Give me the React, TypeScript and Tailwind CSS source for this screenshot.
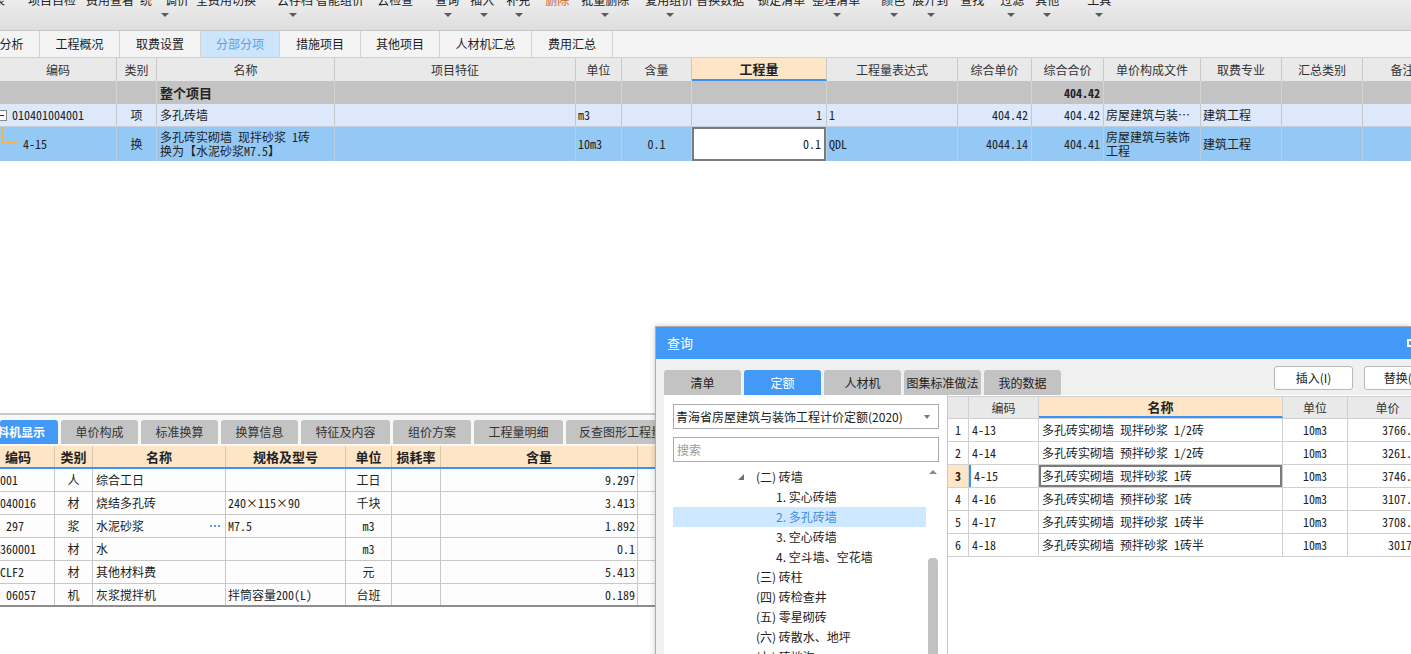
import type { ReactNode } from 'react'

const ui = "font-['Noto_Sans_CJK_SC','Noto_Sans',sans-serif]"
const song = "font-['Noto_Sans_Mono_CJK_SC','Liberation_Mono','Noto_Sans_CJK_SC',monospace]"

const toolLabels: { t: string; c: string; red?: boolean }[] = [
  { t: '报表', c: 'ml-[-19px]' },
  { t: '项目自检', c: 'ml-[23px]' },
  { t: '费用查看', c: 'ml-[10px]' },
  { t: '统', c: 'ml-[6px]' },
  { t: '调价', c: 'ml-[13px]' },
  { t: '全费用切换', c: 'ml-[7px]' },
  { t: '云存档', c: 'ml-[21px]' },
  { t: '智能组价', c: 'ml-[3px]' },
  { t: '云检查', c: 'ml-[13px]' },
  { t: '查询', c: 'ml-[22px]' },
  { t: '插入', c: 'ml-[11px]' },
  { t: '补充', c: 'ml-[12px]' },
  { t: '删除', c: 'ml-[15px]', red: true },
  { t: '批量删除', c: 'ml-[12px]' },
  { t: '复用组价', c: 'ml-[16px]' },
  { t: '替换数据', c: 'ml-[3px]' },
  { t: '锁定清单', c: 'ml-[13px]' },
  { t: '整理清单', c: 'ml-[7px]' },
  { t: '颜色', c: 'ml-[21px]' },
  { t: '展开到', c: 'ml-[7px]' },
  { t: '查找', c: 'ml-[12px]' },
  { t: '过滤', c: 'ml-[16px]' },
  { t: '其他', c: 'ml-[11px]' },
  { t: '工具', c: 'ml-[28px]' },
]

const triMargins = [
  'ml-[161px]', 'ml-[120px]', 'ml-[147px]', 'ml-[28px]', 'ml-[27px]', 'ml-[78px]', 'ml-[57px]',
  'ml-[159px]', 'ml-[49px]', 'ml-[29px]', 'ml-[72px]', 'ml-[28px]', 'ml-[44px]',
]

function Toolbar() {
  return (
    <div className="h-[31px] shrink-0 overflow-hidden border-b border-[#c6c6c6] bg-linear-to-b from-[#ededed] to-[#dedede]">
      <div className="mt-[-8px] flex h-[16px] whitespace-nowrap text-[12px] leading-[16px] text-[#222]">
        {toolLabels.map((l) => (
          <span key={l.t} className={`${l.c} shrink-0 ${l.red ? 'text-[#c8641e]' : ''}`}>
            {l.t}
          </span>
        ))}
      </div>
      <div className="mt-[5px] flex">
        {triMargins.map((m, i) => (
          <span
            key={i}
            className={`${m} h-0 w-0 shrink-0 border-x-[4px] border-t-[4px] border-x-transparent border-t-[#5a5a5a]`}
          />
        ))}
      </div>
    </div>
  )
}

const topTabs = [
  { t: '造价分析', c: 'ml-[-40px] w-[80px]' },
  { t: '工程概况', c: 'w-[80px]' },
  { t: '取费设置', c: 'w-[81px]' },
  { t: '分部分项', c: 'w-[79px]', active: true },
  { t: '措施项目', c: 'w-[81px]' },
  { t: '其他项目', c: 'w-[79px]' },
  { t: '人材机汇总', c: 'w-[92px]' },
  { t: '费用汇总', c: 'w-[81px]' },
]

function TopTabs() {
  return (
    <div className="flex h-[27px] shrink-0 overflow-hidden border-b border-[#cfcfcf] bg-[#f4f4f4] text-[12px] text-[#222]">
      {topTabs.map((tab) => (
        <div
          key={tab.t}
          className={`${tab.c} flex shrink-0 items-center justify-center border-r border-[#d2d2d2] ${
            tab.active ? 'bg-[#cce5fa] text-[#5b9fe6]' : ''
          }`}
        >
          {tab.t}
        </div>
      ))}
    </div>
  )
}

function C({ className = '', children }: { className?: string; children?: ReactNode }) {
  return <div className={`flex items-center overflow-hidden whitespace-nowrap border-r ${className}`}>{children}</div>
}

const mainGrid =
  'grid grid-cols-[117px_40px_178px_241px_46px_70px_135px_131px_74px_72px_97px_81px_81px_80px]'

const mainHeads = ['编码', '类别', '名称', '项目特征', '单位', '含量', '工程量', '工程量表达式', '综合单价', '综合合价', '单价构成文件', '取费专业', '汇总类别', '备注']

function MainTable() {
  return (
    <div className="shrink-0 overflow-hidden">
      <div className={`${mainGrid} h-[23px] bg-[#e9e9e9] text-[12px] text-[#333] [&>*]:border-[#c9c9c9]`}>
        {mainHeads.map((h, i) =>
          i === 6 ? (
            <C key={h} className="justify-center border-b-2 !border-b-[#3d93f2] bg-[#fde5c6] text-[13px] font-bold text-[#222]">
              {h}
            </C>
          ) : (
            <C key={h} className="justify-center">
              {h}
            </C>
          ),
        )}
      </div>

      <div className={`${mainGrid} h-[23px] bg-[#c3c3c3] text-[12px] text-[#222] [&>*]:border-[#d3d3d3]`}>
        <C />
        <C />
        <C className="pl-[3px] text-[13px] font-bold">整个项目</C>
        <C />
        <C />
        <C />
        <C />
        <C />
        <C />
        <C className={`justify-end pr-[3px] font-bold ${song}`}>404.42</C>
        <C />
        <C />
        <C />
        <C />
      </div>

      <div className={`${mainGrid} h-[23px] border-b border-[#c4cfdc] bg-[#dde9fb] text-[12px] text-[#222] ${song} [&>*]:border-[#c8c8c8]`}>
        <C>
          <span className="ml-[-4px] flex h-[11px] w-[11px] shrink-0 items-center justify-center border border-[#8a8a8a] bg-white">
            <span className="h-px w-[5px] bg-[#333]" />
          </span>
          <span className="ml-[5px]">010401004001</span>
        </C>
        <C className="justify-center">项</C>
        <C className="pl-[3px]">多孔砖墙</C>
        <C />
        <C className="pl-[2px]">m3</C>
        <C />
        <C className="justify-end pr-[4px]">1</C>
        <C className="pl-[2px]">1</C>
        <C className="justify-end pr-[3px]">404.42</C>
        <C className="justify-end pr-[3px]">404.42</C>
        <C className="pl-[2px]">房屋建筑与装…</C>
        <C className="pl-[2px]">建筑工程</C>
        <C />
        <C />
      </div>

      <div className={`${mainGrid} h-[34px] bg-[#94c9f6] text-[12px] text-[#222] ${song} [&>*]:border-[#b9cfe2]`}>
        <div className="flex items-center overflow-hidden border-r">
          <span className="ml-[2px] h-[16px] w-[16px] shrink-0 self-start border-b border-l border-b-[#f3b048] border-l-[#f3b048]" />
          <span className="ml-[5px]">4-15</span>
        </div>
        <C className="justify-center">换</C>
        <div className="flex flex-col justify-center overflow-hidden whitespace-nowrap border-r pl-[3px] leading-[14px]">
          <span>多孔砖实砌墙 现拌砂浆 1砖</span>
          <span>换为【水泥砂浆M7.5】</span>
        </div>
        <C />
        <C className="pl-[2px]">10m3</C>
        <C className="justify-center">0.1</C>
        <C className="justify-end bg-white pr-[5px] shadow-[inset_0_0_0_2px_#7b7b7b]">0.1</C>
        <C className="pl-[2px]">QDL</C>
        <C className="justify-end pr-[3px]">4044.14</C>
        <C className="justify-end pr-[3px]">404.41</C>
        <div className="flex flex-col justify-center overflow-hidden whitespace-nowrap border-r pl-[2px] leading-[14px]">
          <span>房屋建筑与装饰</span>
          <span>工程</span>
        </div>
        <C className="pl-[2px]">建筑工程</C>
        <C />
        <C />
      </div>
    </div>
  )
}

const botTabs = [
  { t: '工料机显示', c: 'w-[58px] justify-end pr-[13px]', active: true },
  { t: '单价构成', c: 'w-[77px] justify-center' },
  { t: '标准换算', c: 'w-[77px] justify-center' },
  { t: '换算信息', c: 'w-[77px] justify-center' },
  { t: '特征及内容', c: 'w-[89px] justify-center' },
  { t: '组价方案', c: 'w-[78px] justify-center' },
  { t: '工程量明细', c: 'w-[89px] justify-center' },
  { t: '反查图形工程量', c: 'w-[110px] justify-center' },
]

const botGrid = 'grid grid-cols-[55px_38px_133px_120px_46px_49px_197px_60px]'
const botHeads = ['编码', '类别', '名称', '规格及型号', '单位', '损耗率', '含量', '']
const botRows = [
  ['001', '人', '综合工日', '', '工日', '', '9.297'],
  ['040016', '材', '烧结多孔砖', '240×115×90', '千块', '', '3.413'],
  [' 297', '浆', '水泥砂浆', 'M7.5', 'm3', '', '1.892'],
  ['360001', '材', '水', '', 'm3', '', '0.1'],
  ['CLF2', '材', '其他材料费', '', '元', '', '5.413'],
  [' 06057', '机', '灰浆搅拌机', '拌筒容量200(L)', '台班', '', '0.189'],
]

function BottomPanel() {
  return (
    <div className="flex h-[241px] shrink-0 flex-col overflow-hidden border-t-2 border-[#c8c8c8] bg-[#f7f7f7]">
      <div className="flex h-[29px] shrink-0 items-end gap-[3px] overflow-hidden whitespace-nowrap text-[12px]">
        {botTabs.map((tab) => (
          <div
            key={tab.t}
            className={`${tab.c} flex h-[24px] shrink-0 items-center overflow-hidden rounded-t-[3px] ${
              tab.active ? 'bg-[#4399f6] font-bold text-white' : 'bg-[#c3c3c3] text-[#333]'
            }`}
          >
            {tab.t}
          </div>
        ))}
      </div>
      <div className={`${botGrid} mt-[2px] h-[23px] shrink-0 border-b-2 border-b-[#3d93f2] bg-[#fde5c6] text-[13px] font-bold text-[#222] [&>*]:border-r-[#d6c9b4]`}>
        {botHeads.map((h, i) => (
          <C key={i} className={i === 0 ? 'pl-[5px]' : 'justify-center'}>
            {h}
          </C>
        ))}
      </div>
      {botRows.map((r, ri) => (
        <div
          key={ri}
          className={`${botGrid} h-[23px] shrink-0 bg-[#fdfdfd] text-[12px] text-[#222] ${song} [&>*]:border-r-[#c8c8c8] ${
            ri === botRows.length - 1 ? 'border-b-2 border-b-[#8e8e8e]' : 'border-b border-b-[#c8c8c8]'
          }`}
        >
          <C className="whitespace-pre">{r[0]}</C>
          <C className="justify-center">{r[1]}</C>
          <C className="justify-between pl-[3px] pr-[5px]">
            <span>{r[2]}</span>
            {ri === 2 && (
              <span className="flex gap-[2px]">
                <span className="h-[2px] w-[2px] bg-[#5a9be0]" />
                <span className="h-[2px] w-[2px] bg-[#5a9be0]" />
                <span className="h-[2px] w-[2px] bg-[#5a9be0]" />
              </span>
            )}
          </C>
          <C className="pl-[2px]">{r[3]}</C>
          <C className="justify-center">{r[4]}</C>
          <C>{r[5]}</C>
          <C className="justify-end pr-[2px]">{r[6]}</C>
          <C />
        </div>
      ))}
      <div className="flex-1 bg-white" />
    </div>
  )
}

const qTabs = ['清单', '定额', '人材机', '图集标准做法', '我的数据']

const tree: { t: string; lvl: number; arrow?: boolean; sel?: boolean }[] = [
  { t: '(二) 砖墙', lvl: 1, arrow: true },
  { t: '1. 实心砖墙', lvl: 2 },
  { t: '2. 多孔砖墙', lvl: 2, sel: true },
  { t: '3. 空心砖墙', lvl: 2 },
  { t: '4. 空斗墙、空花墙', lvl: 2 },
  { t: '(三) 砖柱', lvl: 1 },
  { t: '(四) 砖检查井', lvl: 1 },
  { t: '(五) 零星砌砖', lvl: 1 },
  { t: '(六) 砖散水、地坪', lvl: 1 },
  { t: '(七) 砖地沟', lvl: 1 },
]

const dGrid = 'grid grid-cols-[21px_70px_244px_65px_80px]'
const dRows = [
  ['1', '4-13', '多孔砖实砌墙 现拌砂浆 1/2砖', '10m3', '3766.58'],
  ['2', '4-14', '多孔砖实砌墙 预拌砂浆 1/2砖', '10m3', '3261.77'],
  ['3', '4-15', '多孔砖实砌墙 现拌砂浆 1砖', '10m3', '3746.14'],
  ['4', '4-16', '多孔砖实砌墙 预拌砂浆 1砖', '10m3', '3107.52'],
  ['5', '4-17', '多孔砖实砌墙 现拌砂浆 1砖半', '10m3', '3708.94'],
  ['6', '4-18', '多孔砖实砌墙 预拌砂浆 1砖半', '10m3', '3017.8'],
]

function QueryDialog() {
  return (
    <div className="absolute left-[655px] top-[326px] flex h-[340px] w-[756px] flex-col overflow-hidden border-l border-t border-[#aeaeae] bg-[#f0f0f0] shadow-[0_0_6px_rgba(0,0,0,0.2)]">
      <div className="flex h-[32px] shrink-0 items-center bg-[#4399f6] pl-[11px] text-[13px] text-white">
        <span>查询</span>
        <span className="ml-auto mr-[-5px] h-[8px] w-[9px] border-2 border-white" />
      </div>

      <div className="flex h-[36px] shrink-0 items-end overflow-hidden whitespace-nowrap pl-[8px] text-[12px]">
        {qTabs.map((t) => (
          <div
            key={t}
            className={`mr-[3px] flex h-[25px] w-[77px] shrink-0 items-center justify-center rounded-t-[3px] ${
              t === '定额' ? 'bg-[#4399f6] text-white' : 'bg-[#c3c3c3] text-[#222]'
            }`}
          >
            {t}
          </div>
        ))}
        <div className="mb-[5px] ml-[210px] flex h-[24px] w-[79px] shrink-0 items-center justify-center rounded-[3px] border border-[#b8b8b8] bg-white text-[#222]">
          插入(I)
        </div>
        <div className="mb-[5px] ml-[11px] flex h-[24px] w-[79px] shrink-0 items-center justify-center rounded-[3px] border border-[#b8b8b8] bg-white text-[#222]">
          替换(R)
        </div>
      </div>

      <div className="flex min-h-0 flex-1">
        <div className="ml-[8px] flex w-[283px] shrink-0 flex-col bg-white pl-[9px] pt-[9px]">
          <div className="flex h-[25px] w-[266px] shrink-0 items-center border border-[#ababab] pl-[2px] text-[12px] text-[#222]">
            <span className="flex-1 truncate">青海省房屋建筑与装饰工程计价定额(2020)</span>
            <span className="mr-[8px] h-0 w-0 border-x-[3px] border-t-[4px] border-x-transparent border-t-[#777]" />
          </div>
          <div className="mt-[8px] flex h-[25px] w-[266px] shrink-0 items-center border border-[#ababab] pl-[3px] text-[12px] text-[#9a9a9a]">
            搜索
          </div>
          <div className="mt-[3px] flex min-h-0 flex-1">
            <div className="w-[253px] pt-[2px] text-[12px]">
              {tree.map((n) => (
                <div
                  key={n.t}
                  className={`flex h-[20px] items-center whitespace-nowrap ${
                    n.arrow ? 'pl-[64px]' : n.lvl === 1 ? 'pl-[83px]' : 'pl-[103px]'
                  } ${n.sel ? 'bg-[#cde8ff] text-[#3d8ee6]' : 'text-[#222]'}`}
                >
                  {n.arrow && (
                    <svg width="8" height="8" className="mr-[11px] shrink-0">
                      <polygon points="7,1 7,7 1,7" fill="#707070" />
                    </svg>
                  )}
                  {n.t}
                </div>
              ))}
            </div>
            <div className="flex w-[14px] flex-col items-center">
              <span className="mt-[5px] h-0 w-0 border-x-[4px] border-b-[4px] border-x-transparent border-b-[#8a8a8a]" />
              <span className="mt-[84px] w-[10px] flex-1 rounded-[4px] bg-[#c2c2c2]" />
            </div>
          </div>
        </div>

        <div className="flex flex-1 flex-col overflow-hidden border-l border-[#c8c8c8] bg-white pt-[1px]">
          <div className={`${dGrid} h-[23px] shrink-0 border-y border-[#d0d0d0] bg-[#e9e9e9] text-[12px] text-[#333] [&>*]:border-r-[#d0d0d0]`}>
            <C />
            <C className="justify-center">编码</C>
            <C className="justify-center border-b-2 border-b-[#3d93f2] bg-[#fde5c6] text-[13px] font-bold text-[#222]">名称</C>
            <C className="justify-center">单位</C>
            <C className="justify-center">单价</C>
          </div>
          {dRows.map((r) => {
            const sel = r[0] === '3'
            return (
              <div
                key={r[0]}
                className={`${dGrid} h-[23px] shrink-0 border-b border-[#d0d0d0] text-[12px] text-[#222] ${song} [&>*]:border-r-[#d0d0d0]`}
              >
                <C className={`justify-center ${sel ? 'bg-[#fde5c6] font-bold' : ''}`}>{r[0]}</C>
                <C className={`pl-[3px] ${sel ? 'border-l-2 border-l-[#3d93f2] pl-[1px]' : ''}`}>{r[1]}</C>
                <C className={`pl-[3px] ${sel ? 'shadow-[inset_0_0_0_2px_#7b7b7b]' : ''}`}>{r[2]}</C>
                <C className="justify-center">{r[3]}</C>
                <C className="justify-end pr-[3px]">{r[4]}</C>
              </div>
            )
          })}
        </div>
      </div>
    </div>
  )
}

export default function App() {
  return (
    <div className={`relative flex h-[654px] w-[1411px] flex-col overflow-hidden bg-white ${ui}`}>
      <Toolbar />
      <TopTabs />
      <MainTable />
      <div className="flex-1 bg-white" />
      <BottomPanel />
      <QueryDialog />
    </div>
  )
}
